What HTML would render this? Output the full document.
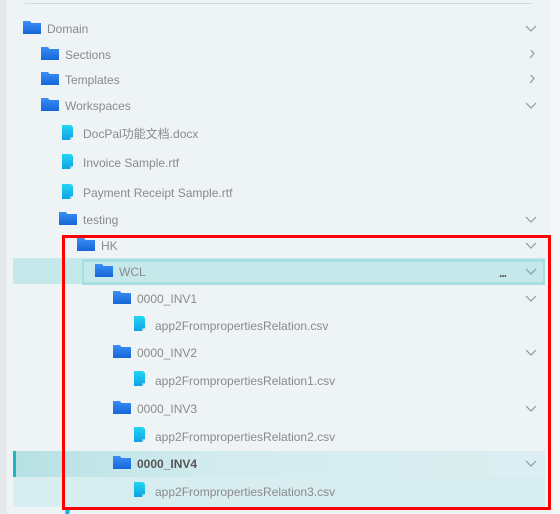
<!DOCTYPE html><html style="overflow:hidden;height:514px"><head><style>
body{margin:0;width:560px;height:514px;background:#eef3f6;position:relative;overflow:hidden;font-family:"Liberation Sans","Noto Sans CJK SC",sans-serif;}
.l{position:absolute;font-size:12px;color:#8a8a8a;line-height:16px;white-space:nowrap}
.f{position:absolute;width:18px;height:13px}
.d{position:absolute;width:11px;height:15px}
.c{position:absolute;width:12px;height:8px}
</style></head><body>
<div style="position:absolute;left:0;top:0;width:7px;height:514px;background:#e4e8ea"></div>
<div style="position:absolute;left:551px;top:0;width:9px;height:514px;background:#f4f7f8"></div>
<div style="position:absolute;left:25px;top:3px;width:507px;height:1px;background:#d4d9dc"></div>
<div style="position:absolute;left:13px;top:258px;width:532px;height:26px;background:#c5e8eb"></div>
<div style="position:absolute;left:82px;top:259px;width:459px;height:20px;border:2px solid #a6dfe2;border-top-width:3px;border-bottom-width:3px"></div>
<div style="position:absolute;left:13px;top:451px;width:532px;height:26px;background:linear-gradient(90deg,#b6e1e4,#d4ecef 40%,#dceef1)"></div>
<div style="position:absolute;left:13px;top:451px;width:3px;height:26px;background:#22b5c0"></div>
<div style="position:absolute;left:13px;top:477px;width:532px;height:30px;background:#d8edf0"></div>
<svg width="0" height="0" style="position:absolute"><defs>
<linearGradient id="g" x1="0" y1="0" x2="0" y2="1"><stop offset="0" stop-color="#3a8ff5"/><stop offset="1" stop-color="#1565d8"/></linearGradient>
<linearGradient id="h" x1="0" y1="0" x2="0" y2="1"><stop offset="0" stop-color="#22d6f0"/><stop offset="1" stop-color="#0fa0e6"/></linearGradient>
<symbol id="F" viewBox="0 0 18 13"><path d="M0 0H7L8.5 2H18V13H0Z" fill="url(#g)"/></symbol>
<symbol id="D" viewBox="0 0 11 15"><path d="M0 0H9L11 2V12L8 15H0Z" fill="url(#h)"/><path d="M8 15V12H11" fill="#7fd6ef"/></symbol>
<symbol id="V" viewBox="0 0 12 8"><path d="M1 1L6 6L11 1" fill="none" stroke="#8a9aa6" stroke-width="1.2"/></symbol>
<symbol id="R" viewBox="0 0 12 8"><path d="M4 -2L8 2.5L4 7" fill="none" stroke="#8a9aa6" stroke-width="1.2" transform="translate(0,1)"/></symbol>
</defs></svg>
<svg class="f" style="left:23px;top:21px"><use href="#F"/></svg><div class="l" style="left:47px;top:21px">Domain</div><svg class="c" style="left:525px;top:25px"><use href="#V"/></svg>
<svg class="f" style="left:41px;top:47px"><use href="#F"/></svg><div class="l" style="left:65px;top:47px">Sections</div><svg class="c" style="left:526px;top:50px"><use href="#R"/></svg>
<svg class="f" style="left:41px;top:72px"><use href="#F"/></svg><div class="l" style="left:65px;top:72px">Templates</div><svg class="c" style="left:526px;top:75px"><use href="#R"/></svg>
<svg class="f" style="left:41px;top:98px"><use href="#F"/></svg><div class="l" style="left:65px;top:98px">Workspaces</div><svg class="c" style="left:525px;top:102px"><use href="#V"/></svg>
<svg class="d" style="left:62px;top:125px"><use href="#D"/></svg><div class="l" style="left:83px;top:126px">DocPal功能文档.docx</div>
<svg class="d" style="left:62px;top:154px"><use href="#D"/></svg><div class="l" style="left:83px;top:155px">Invoice Sample.rtf</div>
<svg class="d" style="left:62px;top:184px"><use href="#D"/></svg><div class="l" style="left:83px;top:185px">Payment Receipt Sample.rtf</div>
<svg class="f" style="left:59px;top:212px"><use href="#F"/></svg><div class="l" style="left:83px;top:212px">testing</div><svg class="c" style="left:525px;top:216px"><use href="#V"/></svg>
<svg class="f" style="left:77px;top:238px"><use href="#F"/></svg><div class="l" style="left:101px;top:238px">HK</div><svg class="c" style="left:525px;top:242px"><use href="#V"/></svg>
<svg class="f" style="left:95px;top:264px"><use href="#F"/></svg><div class="l" style="left:119px;top:264px">WCL</div><div class="l" style="left:499px;top:265px;color:#555;font-weight:bold;letter-spacing:-1px">...</div><svg class="c" style="left:525px;top:268px"><use href="#V"/></svg>
<svg class="f" style="left:113px;top:291px"><use href="#F"/></svg><div class="l" style="left:137px;top:291px">0000_INV1</div><svg class="c" style="left:525px;top:295px"><use href="#V"/></svg>
<svg class="d" style="left:134px;top:316px"><use href="#D"/></svg><div class="l" style="left:155px;top:318px">app2FrompropertiesRelation.csv</div>
<svg class="f" style="left:113px;top:345px"><use href="#F"/></svg><div class="l" style="left:137px;top:345px">0000_INV2</div><svg class="c" style="left:525px;top:349px"><use href="#V"/></svg>
<svg class="d" style="left:134px;top:371px"><use href="#D"/></svg><div class="l" style="left:155px;top:373px">app2FrompropertiesRelation1.csv</div>
<svg class="f" style="left:113px;top:401px"><use href="#F"/></svg><div class="l" style="left:137px;top:401px">0000_INV3</div><svg class="c" style="left:525px;top:405px"><use href="#V"/></svg>
<svg class="d" style="left:134px;top:427px"><use href="#D"/></svg><div class="l" style="left:155px;top:429px">app2FrompropertiesRelation2.csv</div>
<svg class="f" style="left:113px;top:456px"><use href="#F"/></svg><div class="l" style="left:137px;top:456px;color:#555;font-weight:bold">0000_INV4</div><svg class="c" style="left:525px;top:460px"><use href="#V"/></svg>
<svg class="d" style="left:134px;top:482px"><use href="#D"/></svg><div class="l" style="left:155px;top:484px">app2FrompropertiesRelation3.csv</div>
<svg class="d" style="left:62px;top:508px;height:6px"><use href="#D"/></svg>
<div style="position:absolute;left:62px;top:235px;width:483px;height:269px;border:3px solid #f00"></div>
</body></html>
